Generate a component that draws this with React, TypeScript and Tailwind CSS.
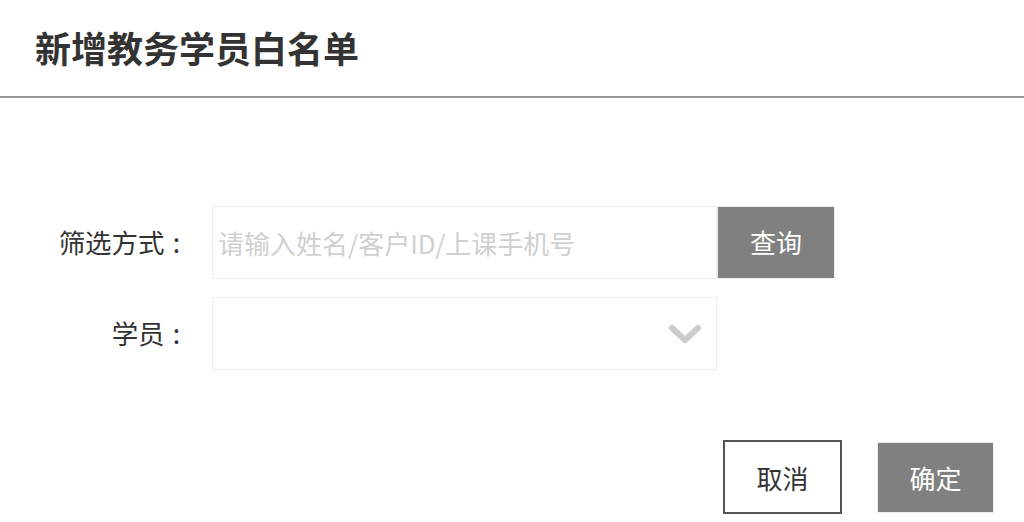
import React from 'react';

// Diálogo: novo aluno na lista branca
const App: React.FC = () => {
  return (
    <div
      className="w-[1024px] h-[522px] bg-white text-[#333] overflow-hidden"
      style={{ fontFamily: '"Noto Sans CJK SC", "Noto Sans", sans-serif' }}
    >
      {/* Cabeçalho com título */}
      <header className="h-[98px] flex items-center pl-[35px] pb-[2px] border-b-2 border-[#999]">
        <h1 className="text-[36px] leading-[36px] font-bold text-[#333]">新增教务学员白名单</h1>
      </header>

      <div className="pt-[108px]">
        {/* Linha de filtro */}
        <div className="flex items-center">
          <label className="w-[212px] pr-[32px] text-right text-[26.5px] leading-none">
            筛选方式<span className="ml-[8px]">:</span>
          </label>
          <div className="w-[505px] h-[73px] border border-[#eee] flex items-center pl-[5px]">
            <input
              className="w-full outline-none text-[26px] placeholder:text-[#d0d0d0] bg-transparent"
              placeholder="请输入姓名/客户ID/上课手机号"
            />
          </div>
          <button className="w-[118px] h-[73px] bg-[#808080] border border-[#eee] text-white text-[26px] flex items-center justify-center pb-[2px]">
            查询
          </button>
        </div>

        {/* Linha do aluno */}
        <div className="flex items-center mt-[18px]">
          <label className="w-[212px] pr-[32px] text-right text-[26.5px] leading-none">
            学员<span className="ml-[8px]">:</span>
          </label>
          <div className="w-[505px] h-[73px] border border-[#eee] flex items-center justify-end pr-[14px]">
            <svg width="34" height="22" viewBox="0 0 34 22" fill="none">
              <path d="M4 5 L17 17 L30 5" stroke="#ccc" strokeWidth="6" strokeLinecap="round" strokeLinejoin="round" />
            </svg>
          </div>
        </div>

        {/* Botões de ação */}
        <div className="flex justify-end items-center gap-[35px] pr-[30px] mt-[70px]">
          <button className="w-[119px] h-[74px] border-2 border-[#555] bg-white text-[26px] text-[#333] flex items-center justify-center">
            取消
          </button>
          <button className="w-[117px] h-[71px] bg-[#808080] border border-[#eee] text-white text-[26px] flex items-center justify-center">
            确定
          </button>
        </div>
      </div>
    </div>
  );
};

export default App;
